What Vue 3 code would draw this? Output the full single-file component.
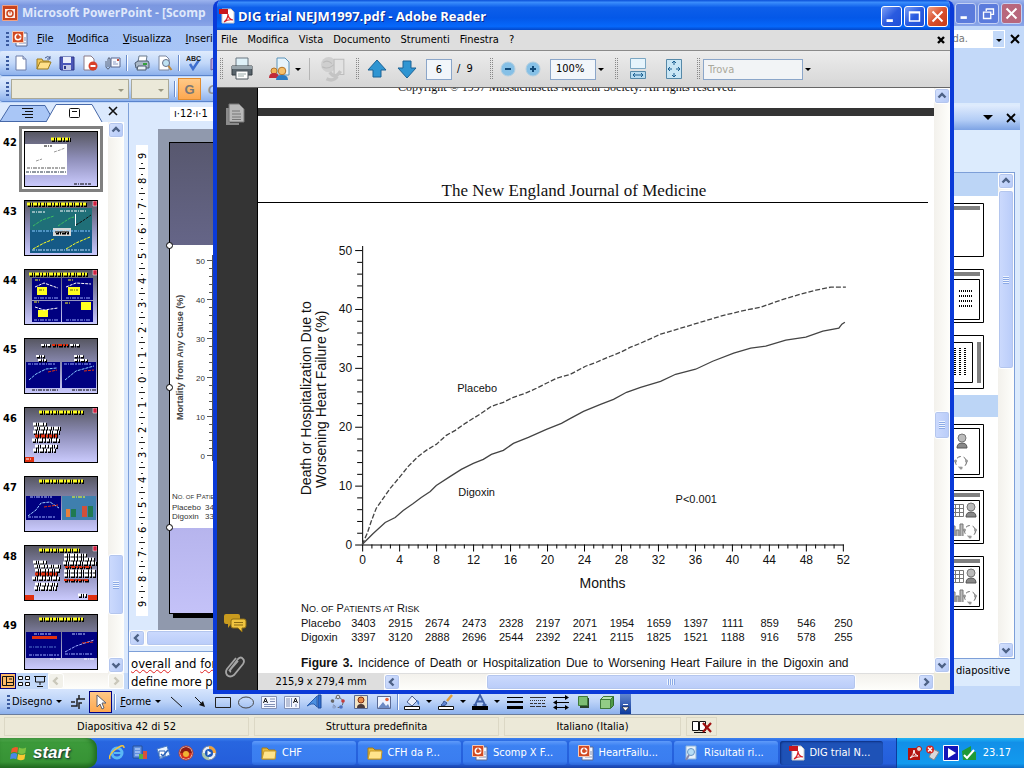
<script setup>
import { h, ref } from 'vue'

const chevrons = {
  up: 'M3.5 8.5L7 5l3.5 3.5',
  down: 'M3.5 5.5L7 9l3.5-3.5',
  left: 'M8.5 3.5L5 7l3.5 3.5',
  right: 'M5.5 3.5L9 7l-3.5 3.5',
}

// before / size / after are the relative lengths of the track around the thumb
const ScrollBar = (props) => {
  const end = (dir) =>
    h('button', { class: 'sb-end', type: 'button', 'aria-label': dir, disabled: !props.size }, [
      h('svg', { viewBox: '0 0 14 14', width: 14, height: 14 }, [h('path', { d: chevrons[dir] })]),
    ])
  const grow = (n) => ({ flexGrow: n })
  return h('div', { class: ['sb', props.across ? 'sb-h' : 'sb-v', { 'sb-off': !props.size }] }, [
    end(props.across ? 'left' : 'up'),
    h('span', { class: 'sb-gap', style: grow(props.before || 1) }),
    props.size ? h('span', { class: 'sb-thumb', style: grow(props.size) }, [h('i')]) : null,
    h('span', { class: 'sb-gap', style: grow(props.after || 0) }),
    end(props.across ? 'right' : 'down'),
  ])
}
ScrollBar.props = { across: Boolean, before: Number, size: Number, after: Number }

const icons = {
  page: '<path d="M3 1h7l3 3v11H3z" fill="#fff" stroke="#6d7da8"/><path d="M10 1v3h3" fill="#cdd8f2" stroke="#6d7da8"/>',
  open: '<path d="M1 14V4h5l1 2h6v2" fill="#f4c95b" stroke="#9b7a1e"/><path d="M1 14l3-7h11l-3 7z" fill="#ffe08a" stroke="#9b7a1e"/><path d="M9 3q3-3 5 0m0-2v3h-3" fill="none" stroke="#44598c"/>',
  save: '<path d="M1 2h14v13H2L1 14z" fill="#4a56b8" stroke="#2e3787"/><path d="M4 2h8v6H4z" fill="#e9edfb"/><path d="M4 10h8v5H4z" fill="#c6cbe6"/><path d="M5 11h2v3H5z" fill="#2e3787"/>',
  perm: '<path d="M2 1h7l3 3v11H2z" fill="#fff" stroke="#8a7a88"/><circle cx="11" cy="11" r="4.500" fill="#d8402a"/><path d="M8.500 11h5" stroke="#fff" stroke-width="2"/>',
  mail: '<path d="M6 3h9v9H6z" fill="#f6f9ff" stroke="#58668e"/><path d="M8 9h5M8 7h3" stroke="#8c9bc4"/><path d="M12 4h2v2h-2z" fill="#c24b3a"/><path d="M1 6v6q2 4 4 0V4q-1-3-2 0v8" fill="none" stroke="#5a6478"/>',
  print: '<path d="M5 1h8l-1 6H4z" fill="#fff" stroke="#6a7a8c"/><path d="M1 8l3-2h10l1 2v5H2z" fill="#a9b8c8" stroke="#4b5a6e"/><path d="M4 11h8v4H3z" fill="#e8f0f8" stroke="#4b5a6e"/><path d="M9 9h4" stroke="#35a03a" stroke-width="2"/>',
  preview: '<path d="M2 1h7l3 3v11H2z" fill="#fff" stroke="#7a869e"/><circle cx="9" cy="8" r="3.500" fill="#bfe2f2" stroke="#66718a"/><path d="M11.500 11l3 4" stroke="#c08a3c" stroke-width="2"/>',
  check: '<path d="M4 9l3 5 6-9" fill="none" stroke="#3f6fd0" stroke-width="2.500"/><text x="0" y="6" font-size="7" font-weight="bold" font-family="Liberation Sans, sans-serif" fill="#222">ABC</text>',
  book: '<path d="M2 4l5-2v11l-5 2zM7 2h7v11H7z" fill="#b9a5dd" stroke="#6b58a0"/>',
  crop: '<path d="M1 12h6V5h5M9 1v4h6M5 8H1M9 15V9h3" fill="none" stroke="#222" stroke-width="1.500"/>',
  pointer: '<path d="M4 1v12l3-3 2 5 2-1-2-5h4z" fill="#fff" stroke="#5a6070"/>',
  line: '<path d="M2 3l11 10" stroke="#111"/>',
  arrow: '<path d="M3 3l8 8" stroke="#111"/><path d="M13 13L7 11l4-4z" fill="#111"/>',
  rect: '<path d="M.5 3.500h15v10H.5z" fill="none" stroke="#222"/>',
  oval: '<ellipse cx="8" cy="8.500" rx="7.500" ry="5.500" fill="none" stroke="#444"/>',
  textH: '<path d="M.5 2.500h15v12H.5z" fill="#f4f7ff" stroke="#8190b5"/><path d="M9 5h5M9 7.500h5M3 10.500h11M3 12.500h11" stroke="#8190b5"/><path d="M2.500 9L4.500 4l2 5M3.500 7.500h2" fill="none" stroke="#111"/>',
  textV: '<path d="M.5 2.500h15v12H.5z" fill="#f4f7ff" stroke="#8190b5"/><path d="M3 4v9M5 4v9M7.500 4v9M12 10v3" stroke="#8190b5"/><path d="M9.500 9l2-5 2 5M10.500 7.500h2" fill="none" stroke="#111"/>',
  wordart: '<path d="M0 12L10 2v11l-3-3H4z" fill="#4b8fe0" stroke="#2a5fb0"/><path d="M11 1l3 0v13h-3z" fill="#2f6fd0" stroke="#1f4c9a"/>',
  diagram: '<g fill="none" stroke="#666" stroke-dasharray="3 2"><circle cx="8" cy="8.500" r="5"/></g><circle cx="8" cy="3" r="1.800" fill="#d9dbe8" stroke="#666"/><circle cx="13" cy="7" r="1.800" fill="#c23a3a"/><circle cx="11" cy="13" r="1.800" fill="#4c6fc0"/><circle cx="4" cy="13" r="1.800" fill="#8fa5d0"/><circle cx="2.500" cy="7" r="1.800" fill="#666"/>',
  clip: '<path d="M1.500 1.500h13v13h-13z" fill="#f2e4c4" stroke="#5a6a94"/><circle cx="8" cy="6" r="3" fill="#e88d4a" stroke="#7b2f16"/><path d="M4 14q0-4 4-4t4 4z" fill="#4a3a3a"/>',
  picture: '<path d="M1.500 2.500h13v12h-13z" fill="#eef4ff" stroke="#5a6a94"/><path d="M2 14l5-6 3 4 2-2 2 4z" fill="#6c8bc4"/><circle cx="11" cy="5.500" r="1.800" fill="#e2603a"/>',
  bucket: '<path d="M3 8l5-6 5 5-5 5z" fill="#eaf0fb" stroke="#4b5f8e"/><path d="M13 6q3 1 2 5-2-1-2-4z" fill="#4b7fd0"/><path d="M.5 12.500h15v3H.5z" fill="#fff" stroke="#111"/>',
  brush: '<path d="M14 1l-5 6" stroke="#e0a03a" stroke-width="2.500"/><path d="M3 11q2-1 3-4l3 2q-1 3-5 3z" fill="#5f86d8" stroke="#39558f"/><path d="M.5 12.500h15v3H.5z" fill="#fff" stroke="#111"/>',
  fontcol: '<path d="M3 11L8 1l5 10M5 7.500h6M1.500 11h3.500M10.500 11h4" fill="none" stroke="#3e5fa6" stroke-width="1.800"/><path d="M0 12h16v4H0z" fill="#000"/>',
  weights: '<path d="M0 3.500h16" stroke="#000"/><path d="M0 8h16" stroke="#000" stroke-width="2"/><path d="M0 13.500h16" stroke="#000" stroke-width="3"/>',
  dashes: '<path d="M0 3.500h16" stroke="#333"/><path d="M0 6.500h16" stroke="#333" stroke-dasharray="1 1"/><path d="M0 9.500h16" stroke="#333" stroke-dasharray="3 1"/><path d="M0 12.500h16" stroke="#333" stroke-dasharray="5 1"/>',
  arrows: '<path d="M0 3.500h13M3 8.500h13M2 13.500h12" stroke="#000"/><path d="M12 1l4 2.500L12 6zM4 6L0 8.500 4 11zM4 11L0 13.500 4 16zM12 11l4 2.500-4 2.500z" fill="#000"/>',
  shadow: '<path d="M4 4h9v10H4z" fill="#27402a"/><path d="M2.500 2.500h9v9h-9z" fill="#7dbd73" stroke="#3e7a3a"/>',
  cube: '<path d="M1.500 5.500l3-3h10v9l-3 3h-10z" fill="#4f9a48" stroke="#2f6a2c"/><path d="M1.500 5.500h10v9h-10z" fill="#92cc86" stroke="#3e7a3a"/><path d="M1.500 5.500l3-3h10l-3 3z" fill="#b9e2af" stroke="#3e7a3a"/>',
  ppt: '<path d="M4 2h11v13H4z" fill="#f4f7ff" stroke="#5a6a94"/><path d="M10 7h4M10 9h4M7 12h7" stroke="#8190b5"/><path d="M.5.5h11v11H.5z" fill="#d24a23" stroke="#f3c9b5"/><circle cx="6" cy="6" r="3.500" fill="#fff"/><circle cx="6" cy="6" r="2" fill="#d24a23"/><path d="M6 2.500v3.500h3.500" fill="none" stroke="#d24a23"/>',
  pptapp: '<path d="M.5.5h15v15H.5z" fill="#c9431d" stroke="#f0a184"/><path d="M3 4h10v9H3z" fill="#fdeee6"/><circle cx="8" cy="8.500" r="3" fill="none" stroke="#c9431d" stroke-width="1.500"/><path d="M8 8.500V5" stroke="#c9431d"/>',
  pdf: '<path d="M3 1h9l3 3v11H3z" fill="#fff" stroke="#c9c9c9"/><path d="M0 1h9v5H0z" fill="#c8161d"/><path d="M5 14q4-3 4-8 0 5 5 6-5-1-9 2z" fill="none" stroke="#d8232a" stroke-width="1.200"/>',
  folder: '<path d="M1 14V3h5l2 2h6v9z" fill="#e6b93c" stroke="#a67c14"/><path d="M1 14l2-8h12l-1 8z" fill="#ffe48c" stroke="#c79a2a"/>',
  search: '<path d="M3 1h10v13H3z" fill="#e6f1fb" stroke="#8fb3d8"/><circle cx="8" cy="7" r="3.500" fill="#b5dcf5" stroke="#6b97c4"/><path d="M6 10l-3 5" stroke="#88a" stroke-width="2"/>',
  ie: '<circle cx="8" cy="8" r="5" fill="none" stroke="#5bb8f5" stroke-width="3"/><path d="M5 8h8" stroke="#5bb8f5" stroke-width="2"/><path d="M1 14Q-1 10 7 4t8-1" fill="none" stroke="#f2c43c" stroke-width="1.500"/>',
  desk: '<path d="M1 1h9v12H1z" fill="#5f8fe0" stroke="#27519a"/><path d="M3 4h5M3 7h5M3 10h5" stroke="#cfe2ff"/><path d="M7 9h4v5H7z" fill="#52b048"/><path d="M11 6h4v8h-4z" fill="#d8513a"/>',
  outlook: '<path d="M2 4l10-3 3 9-10 4z" fill="#e9f3ff" stroke="#4a7cc4"/><path d="M4 6h6v6H4z" fill="#fff" stroke="#2862b8"/><path d="M6 9l2 2 5-6" fill="none" stroke="#2862b8" stroke-width="1.500"/>',
  disc: '<circle cx="8" cy="8" r="7" fill="#f2e7e2" stroke="#b83a26"/><path d="M2 8a6 6 0 0112 0z" fill="#8f1c12"/><path d="M2 8a6 6 0 0012 0z" fill="#d5301c"/><circle cx="8" cy="9" r="3" fill="#f0b433"/>',
  media: '<circle cx="8" cy="8" r="7" fill="#e8eef7" stroke="#6a7f9e"/><path d="M8 1a7 7 0 017 7H8z" fill="#f0a13a"/><path d="M1 8a7 7 0 007 7V8z" fill="#a8c8b0"/><circle cx="8" cy="8" r="4" fill="#1d58b8"/><path d="M6.500 5.500l4 2.500-4 2.500z" fill="#fff"/>',
  trayPdf: '<path d="M1 3h12v12H1z" fill="#b3130f"/><path d="M3 13q4-3 4-8 0 5 4 6-4-1-8 2z" fill="none" stroke="#fff"/><circle cx="12" cy="4" r="2.500" fill="#e8d6d0" stroke="#b3130f"/>',
  trayNet: '<path d="M8 4l6 3-5 8-5-3z" fill="#d8d8dc" stroke="#888"/><circle cx="5" cy="4.500" r="4" fill="#d3251f"/><path d="M3 2.500l4 4m0-4l-4 4" stroke="#fff" stroke-width="1.500"/>',
  trayPlay: '<path d="M.5.5h15v15H.5z" fill="#1414b8" stroke="#fff"/><path d="M5 3l8 5-8 5z" fill="#fff"/>',
  trayOk: '<path d="M1 6l9-5v5l5 1v8H2z" fill="#1f9a36"/><path d="M3 10l3 3 7-8" fill="none" stroke="#fff" stroke-width="2"/>',
  printer: '<path d="M6 1h12v9H6z" fill="#dff1f8" stroke="#6b7780"/><path d="M2 9h20v9H2z" fill="#59646c" stroke="#333b41"/><path d="M2 9h20v3H2z" fill="#98a4ab"/><path d="M6 14h12v8H6z" fill="#fff" stroke="#4d575e"/><path d="M8 17h8M8 19h6" stroke="#9aa"/>',
  people: '<path d="M9 1h8l4 4v13H9z" fill="#e7f4fb" stroke="#5a92b8"/><circle cx="6" cy="14" r="3" fill="#f0b45a" stroke="#b3742a"/><path d="M1 21q0-5 5-5t5 5z" fill="#c02a3a"/><circle cx="14" cy="14" r="3.800" fill="#f5c06a" stroke="#b3742a"/><path d="M8 23q0-5 6-5t6 5z" fill="#2b7cc4"/>',
  sync: '<circle cx="8" cy="8" r="7" fill="#cfcfcf"/><path d="M3 6q4-3 8 1M2 10q5 3 11-2" fill="none" stroke="#bbb"/><path d="M13 3h9v14h-9z" fill="#e2e2e2" stroke="#bdbdbd"/><path d="M9 15q5 7 10-1M6 21q6 3 10-2" fill="none" stroke="#c4c4c4" stroke-width="3"/>',
  pageUp: '<path d="M12 3l9 10h-5v7H8v-7H3z" fill="#2f95d2" stroke="#1b6396"/>',
  pageDown: '<path d="M12 21l9-10h-5V4H8v7H3z" fill="#2f95d2" stroke="#1b6396"/>',
  fitW: '<path d="M4.500 1.500h15v10h-15z" fill="#e6f4fc" stroke="#7ba6c2"/><path d="M4.500 14.500h15v7h-15z" fill="#b8dcf0" stroke="#5689a8"/><path d="M7 18h10M9 16l-2 2 2 2M15 16l2 2-2 2" fill="none" stroke="#1b5f90"/>',
  fitP: '<path d="M4.500 2.500h15v19h-15z" fill="#c9e6f5" stroke="#5689a8"/><path d="M12 4v4M10 6l2-2 2 2M12 20v-4M10 18l2 2 2-2M6 12h4M8 10l-2 2 2 2M18 12h-4M16 10l2 2-2 2" fill="none" stroke="#1b5f90"/>',
}

const pptTools = ['page', 'open', 'save', 'perm', 'mail', '|', 'print', 'preview', '|', 'check', 'book']
const drawLeft = ['line', 'arrow', 'rect', 'oval', 'textH', 'textV', 'wordart', 'diagram', 'clip', 'picture']
const drawColors = ['bucket', 'brush', 'fontcol']
const drawRight = ['weights', 'dashes', 'arrows', 'shadow', 'cube']

const readerMenu = ['File', 'Modifica', 'Vista', 'Documento', 'Strumenti', 'Finestra', '?']
const zoom = ref('100%')
const pageNo = ref('6')

const Y = '#ffff20', W = '#fff', N = '#000080', R = '#e03010', K = '#000'
// r: filled boxes [x, y, w, h, colour]; t: lines of type [x, y, length, colour, height]; c: curves [points, colour]
const title = (x, w) => [x, 5, w, Y, 4]
const slides = [
  { n: 42, sel: true, r: [[1, 13, 42, 31, W]], t: [[27, 8, 20, Y, 4], [20, 15, 8, K, 1], [3, 37, 38, '#555', 1], [2, 41, 40, '#234', 2], [50, 53, 18, K, 2]], c: [['12,30 18,28', '#999'], ['30,21 36,19 41,17', '#999']] },
  { n: 43, mark: true, r: [[6, 8, 62, 22, '#1f6f78'], [6, 30, 62, 23, '#155a86'], [51, 14, 1, 12, W], [29, 28, 18, 8, '#d8d8d8']], t: [[3, 4, 60, Y, 4], [8, 12, 14, W, 1], [36, 11, 26, W, 1], [8, 31, 58, '#8cf', 1], [31, 32, 14, '#666', 3], [8, 50, 58, '#bdf', 1]], c: [['9,26 18,20 30,16', '#3fbf60'], ['34,26 46,18 50,17', '#3fbf60'], ['52,25 60,20 67,15', '#111'], ['9,49 20,43 30,39', Y], ['42,49 52,43 66,37', Y]] },
  { n: 44, mark: true, r: [[8, 9, 29, 22, N], [38, 9, 31, 22, N], [8, 32, 29, 21, N], [38, 32, 31, 21, N], [13, 18, 10, 8, Y], [44, 18, 12, 8, Y], [57, 33, 10, 8, Y], [14, 41, 10, 7, Y]], t: [title(5, 58), [11, 11, 5, Y, 2], [44, 11, 5, Y, 2], [10, 33, 6, Y, 2], [41, 34, 5, Y, 2], [10, 29, 24, '#9af', 1], [42, 29, 24, '#9af', 1], [10, 51, 24, '#9af', 1], [42, 51, 24, '#9af', 1], [15, 21, 6, '#661', 2], [46, 21, 8, '#661', 2]], c: [['11,18 20,14 34,19', W], ['42,18 52,14 67,15', W], ['11,38 20,41 34,39', W]] },
  { n: 45, r: [[2, 24, 34, 26, N], [38, 24, 34, 26, N]], t: [[17, 7, 9, W, 3], [28, 7, 16, R, 3], [46, 7, 9, W, 3], [12, 18, 8, W, 3], [14, 22, 8, W, 3], [50, 18, 9, W, 3], [50, 22, 14, W, 3], [4, 26, 28, '#9af', 1], [40, 26, 28, '#9af', 1], [8, 52, 26, K, 2], [48, 52, 24, K, 2]], c: [['5,42 12,36 22,31 33,30', '#8cf'], ['41,42 52,33 70,28', '#8cf'], ['24,34 33,32', R], ['60,33 70,32', R]] },
  { n: 46, mark: true, r: [[0, 50, 10, 6, R]], t: [title(15, 44), [9, 17, 14, W, 4], [10, 21, 26, W, 4], [9, 25, 26, W, 4], [11, 29, 22, R, 4], [8, 33, 27, W, 4], [11, 39, 22, W, 4], [9, 43, 22, W, 4], [2, 52, 6, W, 1]] },
  { n: 47, r: [[2, 20, 35, 24, N], [38, 20, 34, 24, '#3f7fae'], [42, 33, 4, 8, '#e8803a'], [47, 33, 5, 8, '#1f7a50'], [58, 30, 5, 11, '#d0503a'], [64, 30, 5, 11, '#1f7a50']], t: [title(15, 44), [6, 21, 22, '#bcf', 1], [48, 21, 14, Y, 2], [4, 41, 28, '#9af', 1]], c: [['4,40 12,34 17,27 26,26 35,32', '#9cf'], ['20,31 34,29', R]] },
  { n: 48, mark: true, r: [[0, 50, 10, 6, R], [64, 50, 10, 6, R]], t: [title(15, 40), [9, 17, 14, W, 4], [10, 21, 26, W, 4], [11, 25, 24, W, 4], [11, 29, 22, R, 4], [8, 33, 27, W, 4], [11, 39, 22, W, 4], [10, 43, 22, W, 4], [40, 10, 22, W, 4], [40, 14, 30, W, 4], [39, 18, 33, W, 4], [41, 22, 26, R, 3], [40, 26, 32, W, 4], [40, 30, 32, W, 4], [40, 35, 24, R, 3], [54, 50, 8, W, 4]] },
  { n: 49, r: [[2, 18, 35, 26, N], [38, 18, 35, 26, N], [8, 22, 25, 3, R]], t: [title(15, 44), [10, 20, 18, '#bcf', 1], [48, 20, 14, '#bcf', 1], [5, 33, 28, '#57c', 1], [5, 41, 30, '#9af', 1], [41, 40, 28, '#9af', 1], [26, 45, 10, W, 2], [60, 45, 10, W, 2]], c: [['41,38 52,32 70,26', '#9af'], ['58,29 70,28', R]] },
]

const vRuler = Array.from({ length: 19 }, (_, i) => ({ v: Math.abs(9 - i), y: 11 + Math.round(i * 24.9) }))

const px = (m) => 104.5 + m * 9.23
const py = (v) => 343.5 - v * 5.88
const months = Array.from({ length: 53 }, (_, i) => i)
const percents = Array.from({ length: 26 }, (_, i) => i * 2)
const placebo = '104,343 109,332 113,320 118,307 125,297 132,287 142,275 150,265 160,255 168,249 178,243 188,234 197,229 207,222 215,217 223,212 233,205 245,201 255,196 267,192 278,187 288,182 298,177 312,173 327,165 338,161 352,155 362,151 372,146 382,142 402,133 422,127 442,121 462,115 482,110 502,106 522,99 542,93 557,89 572,86 587,86'
const digoxin = '104,343 115,332 127,321 137,316 145,309 155,302 163,296 172,290 178,284 192,275 203,268 215,262 225,258 233,253 245,249 255,242 270,236 288,228 303,222 312,217 325,210 342,203 355,198 368,191 382,186 402,180 417,173 437,168 454,160 475,152 492,147 507,145 527,139 547,136 564,130 580,127 583,123 586,121'

const risk = [
  ['Placebo', [3403, 2915, 2674, 2473, 2328, 2197, 2071, 1954, 1659, 1397, 1111, 859, 546, 250]],
  ['Digoxin', [3397, 3120, 2888, 2696, 2544, 2392, 2241, 2115, 1825, 1521, 1188, 916, 578, 255]],
]

const tasks = [
  { icon: 'folder', text: 'CHF' },
  { icon: 'folder', text: 'CFH da P...' },
  { icon: 'ppt', text: 'Scomp X F...' },
  { icon: 'ppt', text: 'HeartFailu...' },
  { icon: 'search', text: 'Risultati ri...' },
  { icon: 'pdf', text: 'DIG trial N...', on: true },
]
</script>

<template>
  <div class="desktop">
    <section class="ppt">
      <header class="ppt-title">
        <svg class="ic" viewBox="0 0 16 16" v-html="icons.pptapp" />
        <span class="grow">Microsoft PowerPoint - [Scomp</span>
        <button class="wb" aria-label="Riduci"><svg viewBox="0 0 21 21"><path d="M5 15h7" stroke="#fff" stroke-width="3" /></svg></button>
        <button class="wb" aria-label="Ripristina"><svg viewBox="0 0 21 21"><path d="M8 5.500h8v6h-3M8 5v3" fill="none" stroke="#fff" stroke-width="1.500" /><path d="M5 9h8v7H5z" fill="none" stroke="#fff" stroke-width="1.500" /></svg></button>
        <button class="wb wb-x" aria-label="Chiudi"><svg viewBox="0 0 21 21"><path d="M5 5l11 11M16 5L5 16" stroke="#fff" stroke-width="2.200" /></svg></button>
      </header>

      <nav class="ppt-menu">
        <i class="grip" />
        <svg class="ic" viewBox="0 0 16 16" v-html="icons.ppt" />
        <a href="#"><u>F</u>ile</a>
        <a href="#"><u>M</u>odifica</a>
        <a href="#"><u>V</u>isualizza</a>
        <a href="#" class="grow"><u>I</u>nseri</a>
        <span class="ask">
          <input aria-label="Domanda" value="da." />
          <button aria-label="Apri elenco"><i class="tri" /></button>
        </span>
        <button class="flat" aria-label="Chiudi finestra"><svg viewBox="0 0 10 10" width="10" height="10"><path d="M1 1l8 8M9 1L1 9" stroke="#000" stroke-width="2" /></svg></button>
      </nav>

      <div class="bar bar-one">
        <i class="grip" />
        <template v-for="(t, i) in pptTools" :key="i">
          <i v-if="t === '|'" class="sep" />
          <button v-else class="tool" :aria-label="t"><svg class="ic" viewBox="0 0 16 16" v-html="icons[t]" /></button>
        </template>
      </div>
      <div class="bar bar-two">
        <i class="grip" />
        <button class="combo combo-font" aria-label="Tipo di carattere"><i class="tri" /></button>
        <button class="combo combo-size" aria-label="Dimensione"><i class="tri" /></button>
        <i class="sep" />
        <button class="tool fmt on">G</button>
        <button class="tool fmt"><em>C</em></button>
      </div>

      <main class="work">
        <aside class="outline">
          <div class="tabs">
            <svg viewBox="0 0 129 19" width="129" height="19" aria-hidden="true">
              <path d="M0 18.500L10 2.500h35l9 16z" fill="#a9c6f6" stroke="#4668a8" />
              <path d="M46 19L56 1.500h36l10 17.500" fill="#fff" stroke="#4668a8" />
              <path d="M22 5.500h11M25 8.500h8M22 11.500h11M25 14.500h8" stroke="#111" />
              <rect x="69.500" y="5.500" width="10" height="9" rx="1" fill="#fff" stroke="#111" />
              <path d="M72 8.500h5" stroke="#111" />
              <path d="M109 4l8 8M117 4l-8 8" stroke="#111" stroke-width="1.600" />
            </svg>
          </div>
          <div class="list">
            <ol>
              <li v-for="s in slides" :key="s.n">
                <b>{{ s.n }}</b>
                <svg :class="{ sel: s.sel }" viewBox="0 0 74 56" width="74" height="56">
                  <defs>
                    <linearGradient :id="'g' + s.n" x1="0" y1="0" x2="0" y2="1">
                      <stop offset="0" stop-color="#55555f" />
                      <stop offset="0.500" stop-color="#8f8fba" />
                      <stop offset="1" stop-color="#ccccff" />
                    </linearGradient>
                  </defs>
                  <rect width="74" height="56" :fill="`url(#g${s.n})`" />
                  <rect v-for="(r, i) in s.r" :key="'r' + i" :x="r[0]" :y="r[1]" :width="r[2]" :height="r[3]" :fill="r[4]" />
                  <polyline v-for="(c, i) in s.c" :key="'c' + i" :points="c[0]" fill="none" :stroke="c[1]" stroke-dasharray="3 1" />
                  <g v-for="(t, i) in s.t" :key="'t' + i" fill="none" stroke-dasharray="3 1 1 1 4 1 2 1">
                    <path v-if="t[4] > 2" :d="`M${t[0] + 1} ${t[1] + 1}h${t[2]}`" stroke="#000" :stroke-width="t[4]" />
                    <path :d="`M${t[0]} ${t[1]}h${t[2]}`" :stroke="t[3]" :stroke-width="Math.max(1, t[4] - 1)" />
                  </g>
                  <path v-if="s.mark" d="M69 1h4v5h-4z" fill="#d02040" stroke="#fff" stroke-width="0.500" />
                  <rect x="0.500" y="0.500" width="73" height="55" fill="none" stroke="#000" />
                </svg>
              </li>
            </ol>
            <ScrollBar :before="418" :size="59" :after="42" />
          </div>
          <div class="views">
            <button class="on" aria-label="Normale"><svg viewBox="0 0 14 14"><path d="M1.500 2.500h11v9h-11zM5.500 2v9M6 8.500h6M8 5h3" fill="none" stroke="#111" /></svg></button>
            <button aria-label="Sequenza diapositive"><svg viewBox="0 0 14 14"><path d="M1.500 2.500h4v3h-4zM8.500 2.500h4v3h-4zM1.500 8.500h4v3h-4zM8.500 8.500h4v3h-4z" fill="#fff" stroke="#111" /></svg></button>
            <button aria-label="Presentazione"><svg viewBox="0 0 14 14"><path d="M1 2.500h12M2.500 3v5h9V3M7 8v3M4 12.500h6" fill="none" stroke="#111" /></svg></button>
            <ScrollBar across class="grow" />
          </div>
        </aside>

        <section class="edit">
          <div class="h-ruler"><span>ı·12·ı·1</span></div>
          <div class="stage">
            <svg class="v-ruler" viewBox="0 0 12 471" width="12" height="471">
              <rect width="12" height="471" fill="#fff" />
              <g v-for="(r, i) in vRuler" :key="i">
                <text :transform="`translate(10 ${r.y + 3}) rotate(-90)`" class="rt">{{ r.v }}</text>
                <path v-if="i < 18" :d="`M5 ${r.y + 7.5}h2M3 ${r.y + 12.5}h6M5 ${r.y + 18.5}h2`" stroke="#222" />
              </g>
            </svg>
            <div class="canvas">
              <div class="slide">
                <div class="figure">
                  <svg viewBox="0 0 600 283" width="600" height="283">
                    <text class="mort" transform="translate(13 175) rotate(-90)">Mortality from Any Cause (%)</text>
                    <path d="M42.500 10V216" stroke="#555" />
                    <g v-for="(v, i) in [50, 40, 30, 20, 10, 0]" :key="v">
                      <path :d="`M37 ${15.5 + i * 39}h5`" stroke="#555" />
                      <template v-if="i < 5">
                        <path v-for="k in 4" :key="k" :d="`M39 ${15.5 + i * 39 + k * 8}h3`" stroke="#555" />
                      </template>
                      <text x="35" :y="19 + i * 39" text-anchor="end" class="pt">{{ v }}</text>
                    </g>
                    <text x="2" y="254" class="pt">N<tspan class="sc">O. OF</tspan> P<tspan class="sc">ATIENTS</tspan></text>
                    <text x="2" y="265" class="pr">Placebo</text><text x="35" y="265" class="pr">3403</text>
                    <text x="2" y="274" class="pr">Digoxin</text><text x="35" y="274" class="pr">3397</text>
                  </svg>
                  <i class="knob k1" /><i class="knob k2" /><i class="knob k3" />
                </div>
              </div>
            </div>
          </div>
          <ScrollBar across :before="1" :size="600" :after="100" />
          <div class="notes"><p><span class="bad">overall</span> and <span class="bad">for</span></p><p>define more p</p></div>
        </section>

        <aside class="pane">
          <header><i class="tri big" /><svg viewBox="0 0 10 10" width="10" height="10"><path d="M1 1l8 8M9 1L1 9" stroke="#000" stroke-width="1.800" /></svg></header>
          <div class="layouts">
            <div class="cards">
              <h3 />
              <svg viewBox="0 0 72 54" width="72" height="54"><path class="fr" d="M.5.5h71v53H.5z" /><path d="M4 3h64v4H4z" fill="#808080" /></svg>
              <svg viewBox="0 0 72 54" width="72" height="54"><path class="fr" d="M.5.5h71v53H.5zM4.500 10.500h63v40h-63z" /><path d="M4 3h64v4H4z" fill="#808080" /><path d="M10 22h32M47 22h14M10 27h32M47 27h14M10 32h32M47 32h14M10 37h32M47 37h14" stroke="#000" stroke-width="2" stroke-dasharray="1 1" /></svg>
              <svg viewBox="0 0 72 54" width="72" height="54"><path class="fr" d="M.5.5h71v53H.5zM4.500 7.500h56v40h-56z" /><path d="M65 7h4v41h-4z" fill="#808080" /><path d="M38 13v27M43 13v27M48 13v27M53 13v27" stroke="#000" stroke-width="2" stroke-dasharray="1 1" /></svg>
              <h3 class="next" />
              <svg v-for="k in 3" :key="k" viewBox="0 0 72 54" width="72" height="54">
                <path class="fr" :d="k === 1 ? 'M.5.5h71v53H.5zM4.5 4.5h63v46h-63z' : 'M.5.5h71v53H.5zM4.5 10.500h63v40h-63z'" />
                <path v-if="k > 1" d="M4 3h64v4H4z" fill="#808080" />
                <g :transform="k === 1 ? 'translate(41 9)' : 'translate(50 12)'">
                  <circle cx="9" cy="5" r="4" fill="#bbb" stroke="#777" />
                  <path d="M4 15q0-5 5-5t5 5z" fill="#888" stroke="#555" />
                </g>
                <g :transform="k === 1 ? 'translate(41 30)' : 'translate(50 33)'">
                  <circle cx="8" cy="8" r="5.500" fill="none" stroke="#666" stroke-dasharray="4 3" />
                  <circle cx="2.500" cy="7" r="1.500" fill="#999" /><circle cx="13.500" cy="7" r="1.500" fill="#999" /><circle cx="8" cy="14" r="1.500" fill="#999" />
                </g>
                <g v-if="k > 1" fill="none" stroke="#777">
                  <path d="M39.500 14.500h12v12h-12zM43.500 14v12M47.500 14v12M39 18.500h12M39 22.500h12" />
                  <path d="M40 46V36h3v10M44 46V40h3v6M48 46V34h3v12" fill="#bbb" />
                </g>
              </svg>
            </div>
            <ScrollBar :before="1" :size="178" :after="274" />
          </div>
          <footer>e diapositive</footer>
        </aside>
      </main>

      <div class="bar draw">
        <i class="grip" />
        <button class="lab">Disegno <i class="tri" /></button>
        <button class="tool" aria-label="Ritaglia"><svg class="ic" viewBox="0 0 16 16" v-html="icons.crop" /></button>
        <button class="tool on" aria-label="Seleziona"><svg class="ic" viewBox="0 0 16 16" v-html="icons.pointer" /></button>
        <i class="sep" />
        <button class="lab"><span><u>F</u>orme</span> <i class="tri" /></button>
        <button v-for="t in drawLeft" :key="t" class="tool" :aria-label="t"><svg class="ic" viewBox="0 0 16 16" v-html="icons[t]" /></button>
        <i class="sep" />
        <button v-for="t in drawColors" :key="t" class="tool wide" :aria-label="t"><svg class="ic" viewBox="0 0 16 16" v-html="icons[t]" /><i class="tri" /></button>
        <button v-for="t in drawRight" :key="t" class="tool" :aria-label="t"><svg class="ic" viewBox="0 0 16 16" v-html="icons[t]" /></button>
        <button class="tail" aria-label="Opzioni barra"><svg viewBox="0 0 11 24" width="11" height="24"><path d="M3 14.500h5" stroke="#fff" /><path d="M2 17h7l-3.500 4z" fill="#fff" stroke="#000" stroke-width="0.500" /></svg></button>
      </div>

      <footer class="status">
        <span class="s1">Diapositiva 42 di 52</span>
        <span class="s1">Struttura predefinita</span>
        <span class="s2">Italiano (Italia)</span>
        <span class="s3"><svg viewBox="0 0 22 16" width="22" height="16"><path d="M1.500 2.500h6v9h-6zM8.500 2.500h6v9h-6zM3 13.500h12" fill="#fff" stroke="#111" /><path d="M12 4l8 9M20 4l-8 9" stroke="#a01010" stroke-width="2.200" /></svg></span>
      </footer>
    </section>

    <section class="reader">
      <header class="rd-title">
        <svg class="ic" viewBox="0 0 16 16" v-html="icons.pdf" />
        <h1 class="grow">DIG trial NEJM1997.pdf - Adobe Reader</h1>
        <button class="wb" aria-label="Riduci"><svg viewBox="0 0 21 21"><path d="M5 15h7" stroke="#fff" stroke-width="3" /></svg></button>
        <button class="wb" aria-label="Ingrandisci"><svg viewBox="0 0 21 21"><path d="M5 5.500h11v10H5zM5 6.500h11" fill="none" stroke="#fff" stroke-width="1.600" /></svg></button>
        <button class="wb wb-x" aria-label="Chiudi"><svg viewBox="0 0 21 21"><path d="M5 5l11 11M16 5L5 16" stroke="#fff" stroke-width="2.200" /></svg></button>
      </header>
      <nav class="rd-menu">
        <a v-for="m in readerMenu" :key="m" href="#">{{ m }}</a>
        <button class="flat" aria-label="Chiudi documento"><svg viewBox="0 0 8 8" width="8" height="8"><path d="M1 1l6 6M7 1L1 7" stroke="#000" stroke-width="2.400" /></svg></button>
      </nav>
      <div class="rd-tools">
        <i class="dots first" />
        <button class="rt-a" aria-label="Stampa"><svg viewBox="0 0 24 24" v-html="icons.printer" /></button>
        <button class="rt-b" aria-label="Collabora"><svg viewBox="0 0 24 24" v-html="icons.people" /><i class="tri" /></button>
        <i class="rule" />
        <button class="rt-c" aria-label="Sincronizza"><svg class="big" viewBox="0 0 24 24" v-html="icons.sync" /></button>
        <i class="dots" />
        <button class="rt-d" aria-label="Pagina precedente"><svg viewBox="0 0 24 24" v-html="icons.pageUp" /></button>
        <button class="rt-e" aria-label="Pagina successiva"><svg viewBox="0 0 24 24" v-html="icons.pageDown" /></button>
        <input v-model="pageNo" class="pno" aria-label="Pagina" />
        <span class="of">/&nbsp; 9</span>
        <i class="dots" />
        <button class="rt-f" aria-label="Riduci zoom"><svg class="small" viewBox="0 0 16 16"><circle cx="8" cy="8" r="7" fill="#86c0e6" stroke="#b3cfe0" /><path d="M5 8h6" stroke="#124a78" stroke-width="2" /></svg></button>
        <button class="rt-g" aria-label="Aumenta zoom"><svg class="small" viewBox="0 0 16 16"><circle cx="8" cy="8" r="7" fill="#86c0e6" stroke="#b3cfe0" /><path d="M5 8h6M8 5v6" stroke="#124a78" stroke-width="2" /></svg></button>
        <select v-model="zoom" class="zoom" aria-label="Zoom"><option>100%</option></select>
        <i class="tri after" />
        <i class="dots later" />
        <button class="rt-h" aria-label="Adatta larghezza"><svg viewBox="0 0 24 24" v-html="icons.fitW" /></button>
        <button class="rt-i" aria-label="Adatta pagina"><svg viewBox="0 0 24 24" v-html="icons.fitP" /></button>
        <i class="dots near" />
        <input class="find" aria-label="Trova" placeholder="Trova" />
        <i class="tri after" />
      </div>

      <div class="rd-body">
        <aside class="rail">
          <button aria-label="Pagine"><svg viewBox="0 0 24 24"><path d="M3 6h4v15h9v2H3z" fill="#8b8b8b" /><path d="M6 2h10l5 5v13H6z" fill="#b9b9b9" stroke="#777" /><path d="M9 9h8M9 12h9M9 15h9M9 17.500h9" stroke="#777" /></svg></button>
          <span class="grow" />
          <button aria-label="Commenti"><svg viewBox="0 0 24 24"><path d="M3 2h12q2 0 2 2v6q0 2-2 2H8l-3 4v-4H3q-2 0-2-2V4q0-2 2-2z" fill="#c89a1e" /><path d="M10 7h11q2 0 2 2v5q0 2-2 2h-2v4l-4-4h-5q-2 0-2-2V9q0-2 2-2z" fill="#f0c440" stroke="#8a6a12" /><path d="M11 10.500h9M11 13h9" stroke="#8a6a12" /></svg></button>
          <button class="clipb" aria-label="Allegati"><svg viewBox="0 0 24 24"><path d="M6 17L15 5q3-3 5 0 2 2 0 5l-9 11q-4 3-7 0-2-3 0-6L13 4M8 18q-2-1 0-3l7-8" fill="none" stroke="#a5a5a5" stroke-width="1.800" /></svg></button>
        </aside>
        <div class="view">
          <div class="doc">
            <div class="prev"><p>Copyright © 1997 Massachusetts Medical Society. All rights reserved.</p></div>
            <article>
              <h2>The New England Journal of Medicine</h2>
              <svg class="chart" viewBox="0 0 675 391">
                <path d="M104.500 45V344M104 343.500H585" stroke="#000" fill="none" />
                <template v-for="v in percents" :key="'v' + v">
                  <path :d="`M${v % 10 ? 99 : 97} ${py(v)}H104`" stroke="#000" />
                  <text v-if="v % 10 === 0" x="94" :y="py(v) + 4" text-anchor="end">{{ v }}</text>
                </template>
                <template v-for="m in months" :key="'m' + m">
                  <path :d="`M${px(m)} 343v${m % 4 ? 4 : 7}`" stroke="#000" />
                  <text v-if="m % 4 === 0" :x="px(m)" y="362" text-anchor="middle">{{ m }}</text>
                </template>
                <polyline :points="placebo" class="curve" stroke-dasharray="5 2" />
                <polyline :points="digoxin" class="curve" />
                <text x="199" y="191" class="s">Placebo</text>
                <text x="200" y="295" class="s">Digoxin</text>
                <text x="417" y="302" class="s">P&lt;0.001</text>
                <text x="344" y="386" text-anchor="middle" class="l">Months</text>
                <text class="l" text-anchor="middle" transform="translate(53 197) rotate(-90)">Death or Hospitalization Due to</text>
                <text class="l" text-anchor="middle" transform="translate(68 198) rotate(-90)">Worsening Heart Failure (%)</text>
              </svg>
              <table>
                <caption>N<small>O. OF</small> P<small>ATIENTS AT</small> R<small>ISK</small></caption>
                <tbody>
                  <tr v-for="r in risk" :key="r[0]"><th scope="row">{{ r[0] }}</th><td v-for="(v, i) in r[1]" :key="i">{{ v }}</td></tr>
                </tbody>
              </table>
              <p class="legend"><b>Figure 3.</b> Incidence of Death or Hospitalization Due to Worsening Heart Failure in the Digoxin and</p>
            </article>
          </div>
          <div class="vs"><ScrollBar :before="307" :size="26" :after="218" /></div>
          <div class="foot"><span>215,9 x 279,4 mm</span><ScrollBar across class="grow" :before="86" :size="366" :after="62" /></div>
          <i class="corner" />
        </div>
      </div>
    </section>

    <footer class="taskbar">
      <button class="start">
        <svg viewBox="0 0 20 20" width="18" height="18"><path d="M2 5q4-3 7-1l-1 6q-3-2-7 0z" fill="#ee5a2a" /><path d="M10 4q4 2 8 0l-1 6q-4 2-8 0z" fill="#7cc242" /><path d="M1 11q4-2 7 0l-1 6q-3-2-7 0z" fill="#4a86e8" /><path d="M9 11q4 2 8 0l-1 6q-4 2-8 0z" fill="#fbc832" /></svg>
        <span>start</span>
      </button>
      <div class="quick">
        <button v-for="q in ['ie', 'desk', 'outlook', 'disc', 'media']" :key="q" :aria-label="q"><svg class="ic" viewBox="0 0 16 16" v-html="icons[q]" /></button>
      </div>
      <div class="tasks">
        <button v-for="t in tasks" :key="t.text" :class="{ on: t.on }"><svg class="ic" viewBox="0 0 16 16" v-html="icons[t.icon]" />{{ t.text }}</button>
      </div>
      <div class="tray">
        <svg v-for="q in ['trayPdf', 'trayNet', 'trayPlay', 'trayOk']" :key="q" class="ic" viewBox="0 0 16 16" v-html="icons[q]" />
        <time>23.17</time>
      </div>
    </footer>
  </div>
</template>

<style>
html, body { margin: 0; background: #c3d9f9; }
.sb { display: flex; background: linear-gradient(90deg, #f3f1ec, #fefefb); }
.sb-v { flex-direction: column; width: 16px; }
.sb-h { height: 16px; flex: none; background: linear-gradient(#f3f1ec, #fefefb); }
.sb-end { flex: none; width: 16px; height: 16px; box-sizing: border-box; padding: 0; border: 1px solid #fff; border-radius: 3px; background: linear-gradient(135deg, #d6e2fd, #b3c8f7); box-shadow: inset 0 0 0 1px #b4c6ee; display: grid; place-items: center; }
.sb-end path { fill: none; stroke: #4d6185; stroke-width: 2.4; }
.sb-gap { flex: 0 1 0; }
.sb-thumb { flex: 0 1 0; display: grid; place-items: center; box-sizing: border-box; border: 1px solid #fff; border-radius: 3px; background: linear-gradient(90deg, #ccdafd, #b9ccf9); box-shadow: inset 0 0 0 1px #b4c6ee; }
.sb-h .sb-thumb { background: linear-gradient(#ccdafd, #b9ccf9); }
.sb-thumb i { width: 6px; height: 8px; background: repeating-linear-gradient(#eef4fe 0 1px, #8caae6 1px 2px); }
.sb-h .sb-thumb i { width: 8px; height: 6px; background: repeating-linear-gradient(90deg, #eef4fe 0 1px, #8caae6 1px 2px); }
.sb-off .sb-end { background: #f2f1ea; box-shadow: none; }
.sb-off .sb-end path { stroke: #c9c7ba; }
</style>

<style scoped>
.desktop { position: relative; height: 100vh; min-height: 600px; overflow: hidden; display: flex; flex-direction: column; font: 11px/14px "DejaVu Sans Condensed", "Noto Sans", sans-serif; color: #000; }
button { font: inherit; color: inherit; padding: 0; border: 0; background: none; }
input, select { font: inherit; box-sizing: border-box; margin: 0; }
a { color: inherit; text-decoration: none; }
.grow { flex: 1; }
.ic { width: 16px; height: 16px; flex: none; display: block; }
.tri { width: 0; height: 0; border: 3px solid transparent; border-top-color: #000; border-bottom: 0; flex: none; display: inline-block; }
.tri.big { border-width: 5px; border-bottom: 0; }
.flat { display: grid; place-items: center; }

.ppt { flex: 1; min-height: 0; display: flex; flex-direction: column; background: #c3d9f9; }
.ppt-title { height: 26px; flex: none; display: flex; align-items: center; gap: 2px; padding: 0 2px; background: linear-gradient(#9db4ee, #7b97e0 20%, #7e9ce4 80%, #8aa5e8); color: #dfe8fb; font: bold 12px/20px "Open Sans", sans-serif; }
.ppt-title span { padding-left: 2px; }
.wb { width: 21px; height: 21px; box-sizing: border-box; border: 1px solid #fff; border-radius: 3px; background: linear-gradient(135deg, #7d9ff5, #2a5be0 50%, #1f50d8); }
.wb svg { display: block; width: 19px; height: 19px; }
.wb-x { background: linear-gradient(135deg, #f0a186, #d9502c 50%, #c63c18); }
.ppt-title .wb { border-color: #c3d0f4; background: #5b7bdc; }
.ppt-title .wb-x { background: #b8677c; }
.ppt-menu { height: 25px; flex: none; display: flex; align-items: center; padding: 0 4px 0 6px; background: linear-gradient(90deg, #a0bff5, #c3d9f9 80%); }
.ppt-menu > .ic { margin: 0 9px 0 3px; }
.ppt-menu a { margin-right: 14px; }
.grip { width: 3px; height: 14px; flex: none; background: repeating-linear-gradient(#3b5ba0 0 2px, transparent 2px 4px); }
.ask { display: flex; width: 150px; height: 18px; background: #fff; margin-right: 5px; }
.ask input { flex: 1; min-width: 0; border: 0; background: #fff; color: #777; text-align: right; padding: 0 24px 0 0; }
.ask button { width: 13px; background: #c3d9f9; border: 1px solid #fff; }
.bar { flex: none; display: flex; align-items: center; height: 24px; padding-left: 6px; background: linear-gradient(#dfebfd, #c2d8f9 50%, #8db1ec); border-bottom: 1px solid #5a84cc; }
.bar-one, .bar-two { width: 70%; box-sizing: border-box; height: 25px; border-radius: 3px; margin-bottom: 1px; }
.tool { width: 23px; height: 22px; display: flex; align-items: center; justify-content: center; flex: none; }
.tool.on { box-sizing: border-box; border: 1px solid #000080; background: linear-gradient(#ffc987, #fda850); }
.tool.wide { width: 34px; gap: 6px; }
.sep { width: 1px; height: 16px; margin: 0 3px 0 2px; background: #6a8ccb; box-shadow: 1px 0 #fff; flex: none; }
.combo { height: 20px; box-sizing: border-box; background: #ebe9d9; border: 1px solid #aaa998; text-align: right; padding-right: 4px; }
.combo .tri { border-top-color: #999782; }
.combo-font { width: 118px; margin: 0 2px; }
.combo-size { width: 38px; margin-right: 3px; }
.fmt { font: bold 13px "Liberation Sans", sans-serif; color: #8a8f99; }
.fmt.on { border-color: #e08c30; color: #777; }

.work { flex: 1; min-height: 0; display: flex; background: #dbe9fd; }
.outline { width: 129px; flex: none; display: flex; flex-direction: column; border-right: 1px solid #7d9fd8; box-sizing: border-box; }
.tabs { height: 19px; flex: none; overflow: hidden; }
.list { flex: 1; min-height: 0; display: flex; background: #fff; margin-right: 4px; }
.list ol { flex: 1; min-width: 0; margin: 0; padding: 9px 0 0 3px; list-style: none; overflow: hidden; }
.list li { display: flex; align-items: flex-start; height: 69px; }
.list b { width: 21px; font: bold 11px/14px "DejaVu Sans Condensed", sans-serif; padding-top: 5px; box-sizing: border-box; }
.list li svg { display: block; flex: none; }
.sel { outline: 3px solid #808080; outline-offset: 2px; }
.views { display: flex; height: 16px; flex: none; padding-right: 4px; background: #c3d9f9; }
.views > button { width: 16px; height: 16px; box-sizing: border-box; padding: 1px; flex: none; }
.views > button svg { display: block; width: 14px; height: 14px; }
.views .on { background: #fdb866; border: 1px solid #000080; padding: 0; }
.edit { flex: 1; min-width: 0; display: flex; flex-direction: column; background: #dbe9fd; }
.h-ruler { height: 26px; flex: none; padding: 4px 0 0 41px; box-sizing: border-box; }
.h-ruler span { display: block; height: 14px; background: #fff; padding-left: 4px; }
.stage { flex: 1; min-height: 0; display: flex; overflow: hidden; }
.v-ruler { margin: 16px 10px 0 7px; flex: none; }
.rt { font-size: 11px; }
.canvas { flex: 1; min-width: 0; background: #9099ad; padding: 13px 11px; overflow: hidden; }
.slide { height: calc(100% - 3px); box-sizing: border-box; border: 1px solid #000; box-shadow: 4px 4px 0 #000; padding-top: 102px; background: linear-gradient(#58586f, #67678b 25%, #b5b3ec 80%, #c4c2f8); }
.figure { position: relative; background: #fff; width: 100%; height: 283px; overflow: visible; }
.figure svg { display: block; width: 600px; }
.pt { font: 8px "Liberation Sans", sans-serif; fill: #333; }
.sc { font-size: 6px; }
.pr { font: 8px "Liberation Sans", sans-serif; fill: #333; }
.mort { font: bold 9px "Liberation Sans", sans-serif; fill: #444; }
.knob { position: absolute; left: -4px; width: 5px; height: 5px; border: 1px solid #000; border-radius: 50%; background: #fff; }
.k1 { top: -3px; }
.k2 { top: 50%; margin-top: -3px; }
.k3 { bottom: -3px; }
.notes { height: 38px; flex: none; margin-top: 5px; box-sizing: border-box; border-top: 1px solid #7d9fd8; background: #fff; padding: 3px 2px 0; font-size: 13px; line-height: 18px; overflow: hidden; white-space: nowrap; }
.notes p { margin: 0; }
.bad { text-decoration: underline wavy #e02020 1px; }
.pane { width: 200px; flex: none; display: flex; flex-direction: column; border-right: 4px solid #c3d9f9; box-sizing: border-box; background: #dcebfd; }
.pane header { height: 25px; flex: none; display: flex; align-items: center; justify-content: flex-end; gap: 13px; padding-right: 4px; margin-top: 2px; background: linear-gradient(#e0ecfd, #b3cdf6 60%, #7da3e4); }
.layouts { flex: 1; min-height: 0; margin: 42px 5px 0 8px; display: flex; border: 1px solid #7d9fd8; background: #fff; }
.cards { flex: 1; display: flex; flex-direction: column; align-items: flex-end; gap: 12px; overflow: hidden; }
.cards svg { margin-right: 14px; flex: none; }
.cards h3 { width: 100%; height: 23px; margin: 0 0 -5px; background: #bcd5f6; flex: none; }
.cards .next { height: 22px; margin: -6px 0 -5px; }
.fr { fill: #fff; stroke: #000; }
.pane footer { height: 30px; line-height: 23px; flex: none; text-align: right; padding-right: 10px; border-bottom: 3px solid #c3d9f9; box-sizing: border-box; }
.draw { height: 25px; border-bottom-color: #6b7d9c; padding-left: 7px; padding-right: 0; }
.draw { background: linear-gradient(90deg, transparent 628px, #c3d9f9 628px), linear-gradient(#d6e5fd, #bcd3f8 50%, #8db1ec); }
.lab { display: flex; align-items: center; gap: 4px; padding: 0 4px 0 2px; }
.tail { width: 11px; height: 24px; background: linear-gradient(#7395d8, #0d3a9c); margin-left: 2px; }
.status { height: 23px; flex: none; display: flex; gap: 5px; padding: 2px 4px; box-sizing: border-box; background: #ece9d8; }
.status span { border: 1px solid #dcd8c5; display: flex; align-items: center; justify-content: center; box-sizing: border-box; }
.s1 { width: 245px; }
.s2 { width: 177px; }
.s3 { width: 31px; }

.reader { position: absolute; left: 213px; right: 70px; top: 0; bottom: 74px; display: flex; flex-direction: column; box-sizing: border-box; border: solid #0a3ad8; border-width: 0 4px 4px; border-radius: 8px 8px 0 0; background: #dedede; overflow: hidden; }
.rd-title { height: 30px; flex: none; display: flex; align-items: center; gap: 2px; padding: 2px 2px 0 2px; box-sizing: border-box; margin: 0 -4px; padding-left: 6px; padding-right: 6px; background: linear-gradient(#0a4fd8, #3a8cfb 8%, #0d5eea 25%, #0458e8 60%, #0668fb 88%, #0347c8); }
.rd-title h1 { margin: 0; padding-left: 1px; color: #fff; font: bold 13px/18px "Open Sans", sans-serif; text-shadow: 1px 1px #0a2a90; }
.rd-menu { height: 20px; flex: none; display: flex; align-items: center; gap: 10px; padding: 0 5px 0 4px; border-bottom: 1px solid #8a8a8a; }
.rd-menu button { margin-left: auto; }
.rd-tools { height: 37px; flex: none; display: flex; align-items: center; box-sizing: border-box; border-bottom: 1px solid #666; background: linear-gradient(#ececec, #d6d6d6); }
.rd-tools button { display: flex; align-items: center; justify-content: center; gap: 3px; flex: none; }
.rd-tools svg { width: 24px; height: 24px; }
.rd-tools svg.big { width: 26px; height: 26px; }
.rd-tools svg.small { width: 16px; height: 16px; }
.dots { width: 4px; height: 22px; flex: none; background: conic-gradient(#888 25%, transparent 0) 0 0 / 2px 2px; }
.dots.first { margin: 0 2px; }
.dots.later { margin-left: 9px; }
.dots.near { margin: 0 3px 0 6px; }
.rule { width: 1px; margin-right: 1px; height: 22px; background: #b5b5b5; }
.rt-a { width: 34px; }
.rt-b { width: 50px; }
.rt-c { width: 44px; }
.rt-d { width: 36px; }
.rt-e { width: 24px; }
.pno { width: 26px; height: 21px; margin-left: 7px; text-align: center; border: 1px solid #8ba6c9; background: #f2f6fa; padding: 0; }
.of { width: 37px; padding-left: 5px; box-sizing: border-box; }
.rt-f { width: 30px; }
.rt-g { width: 20px; margin-right: 7px; }
.zoom { width: 46px; height: 21px; appearance: none; border: 1px solid #8ba6c9; background: #f2f6fa; padding: 0 5px; color: #000; border-radius: 0; }
.after { margin: 0 1px 0 2px; }
.rt-h { width: 40px; }
.rt-i { width: 32px; }
.find { width: 100px; height: 21px; border: 1px solid #8ba6c9; background: #f2f4f6; padding: 0 4px; }
.find::placeholder { color: #aaa89a; opacity: 1; }
.rd-body { flex: 1; min-height: 0; display: flex; }
.rail { width: 41px; flex: none; box-sizing: border-box; border-right: 1px solid #000; background: #343434; display: flex; flex-direction: column; align-items: center; padding: 14px 4px 12px 0; }
.rail svg { width: 24px; height: 24px; display: block; }
.clipb { margin-top: 18px; }
.view { flex: 1; min-width: 0; display: grid; grid-template: minmax(0, 1fr) 17px / minmax(0, 1fr) 16px; background: #fff; }
.doc { overflow: hidden; background: #fff; color: #111; font-family: "Liberation Sans", sans-serif; }
.prev { height: 20px; border-bottom: 8px solid #343434; overflow: hidden; }
.prev p { margin: -8px 0 0 140px; font: 12px/15px "Liberation Serif", serif; white-space: nowrap; }
article h2 { margin: 0 6px 0 0; padding: 66px 0 2px; font: 17px/18px "Liberation Serif", serif; text-align: center; text-indent: -38px; border-bottom: 1px solid #000; }
.chart { display: block; width: 100%; margin-top: -2px; font: 12px "Liberation Sans", sans-serif; fill: #111; }
.curve { fill: none; stroke: #444; stroke-width: 1.3; }
.s { font-size: 11px; }
.l { font-size: 14px; }
table { width: 83%; margin: 7px 0 0 43px; table-layout: fixed; border-collapse: collapse; font-size: 11px; line-height: 14px; }
caption { text-align: left; font-size: 11px; line-height: 16px; }
caption small { font-size: 9px; line-height: 1; }
th { width: 44px; font-weight: normal; text-align: left; padding: 0; }
td { text-align: center; padding: 0; }
.legend { width: 81%; margin: 11px 0 0 43px; font-size: 12px; line-height: 16px; text-align: justify; text-align-last: justify; }
.vs { display: flex; }
.foot { display: flex; background: #dedede; align-items: center; min-width: 0; }
.foot span { width: 126px; flex: none; text-align: center; }
.foot :deep(.sb span) { width: auto; }
.foot :deep(.sb-thumb), .foot :deep(.sb-gap) { flex-shrink: 1; flex-basis: 0; }
.corner { background: #ece9d8; }

.taskbar { height: 30px; flex: none; display: flex; background: linear-gradient(#3c81f0, #2866e0 12%, #245edb 85%, #1941a5); color: #fff; }
.start { width: 97px; display: flex; align-items: center; gap: 5px; padding-left: 10px; border-radius: 0 10px 10px 0; background: linear-gradient(#5fb85c, #3c9a3a 15%, #379335 80%, #236b22); box-shadow: inset -3px 0 5px #1f6b1e; color: #fff; font: italic bold 17px "Liberation Sans", sans-serif; text-shadow: 1px 1px 2px #123; }
.quick { display: flex; align-items: center; gap: 7px; margin: 0 35px 0 12px; }
.tasks { flex: 1; display: flex; gap: 2px; padding: 3px 13px 3px 0; }
.tasks button { flex: 1 1 0; min-width: 0; display: flex; align-items: center; gap: 5px; padding-left: 9px; color: #fff; border-radius: 3px; white-space: nowrap; background: linear-gradient(#5f9bfa, #3c81f2 20%, #3a7df0 85%, #2c66d8); }
.tasks .on { background: #1e52b7; box-shadow: inset 1px 1px 2px #0d2f80; }
.tray { width: 128px; box-sizing: border-box; display: flex; align-items: center; gap: 2px; padding: 0 13px 0 10px; border-left: 1px solid #0c3c9c; background: linear-gradient(#1fb3f4, #1290e8 15%, #129aee 85%, #0c6fc8); }
.tray time { margin-left: auto; }
</style>
